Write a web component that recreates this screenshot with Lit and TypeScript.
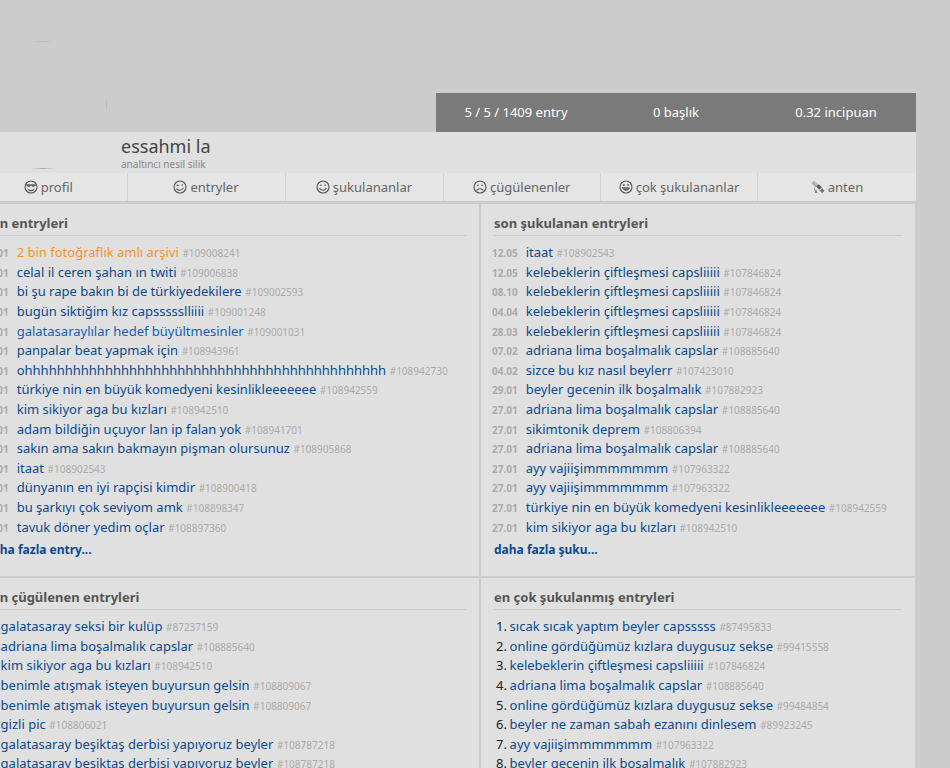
import { LitElement, html, css, svg } from "lit";
import { customElement } from "lit/decorators.js";

type Row = { d?: string; t: string; id: string; c?: string };

const E = (d: string, t: string, id: string, c?: string): Row => ({ d, t, id, c });
const N = (t: string, id: string): Row => ({ t, id });

const recent: Row[] = [
  E("30.01", "2 bin fotoğraflık amlı arşivi", "#109008241", "orange"),
  E("30.01", "celal il ceren şahan ın twiti", "#109006838"),
  E("30.01", "bi şu rape bakın bi de türkiyedekilere", "#109002593"),
  E("30.01", "bugün siktiğim kız capssssslliiii", "#109001248"),
  E("30.01", "galatasaraylılar hedef büyültmesinler", "#109001031", "light"),
  E("29.01", "panpalar beat yapmak için", "#108943961"),
  E("29.01", "ohhhhhhhhhhhhhhhhhhhhhhhhhhhhhhhhhhhhhhhhhhhhh", "#108942730"),
  E("29.01", "türkiye nin en büyük komedyeni kesinlikleeeeeee", "#108942559"),
  E("29.01", "kim sikiyor aga bu kızları", "#108942510"),
  E("29.01", "adam bildiğin uçuyor lan ip falan yok", "#108941701"),
  E("29.01", "sakın ama sakın bakmayın pişman olursunuz", "#108905868"),
  E("28.01", "itaat", "#108902543"),
  E("28.01", "dünyanın en iyi rapçisi kimdir", "#108900418"),
  E("28.01", "bu şarkıyı çok seviyom amk", "#108898347"),
  E("28.01", "tavuk döner yedim oçlar", "#108897360"),
];

const liked: Row[] = [
  E("12.05", "itaat", "#108902543"),
  E("12.05", "kelebeklerin çiftleşmesi capsliiiii", "#107846824"),
  E("08.10", "kelebeklerin çiftleşmesi capsliiiii", "#107846824"),
  E("04.04", "kelebeklerin çiftleşmesi capsliiiii", "#107846824"),
  E("28.03", "kelebeklerin çiftleşmesi capsliiiii", "#107846824"),
  E("07.02", "adriana lima boşalmalık capslar", "#108885640"),
  E("04.02", "sizce bu kız nasıl beylerr", "#107423010"),
  E("29.01", "beyler gecenin ilk boşalmalık", "#107882923"),
  E("27.01", "adriana lima boşalmalık capslar", "#108885640"),
  E("27.01", "sikimtonik deprem", "#108806394"),
  E("27.01", "adriana lima boşalmalık capslar", "#108885640"),
  E("27.01", "ayy vajiişimmmmmmm", "#107963322"),
  E("27.01", "ayy vajiişimmmmmmm", "#107963322"),
  E("27.01", "türkiye nin en büyük komedyeni kesinlikleeeeeee", "#108942559"),
  E("27.01", "kim sikiyor aga bu kızları", "#108942510"),
];

const disliked: Row[] = [
  N("galatasaray seksi bir kulüp", "#87237159"),
  N("adriana lima boşalmalık capslar", "#108885640"),
  N("kim sikiyor aga bu kızları", "#108942510"),
  N("benimle atışmak isteyen buyursun gelsin", "#108809067"),
  N("benimle atışmak isteyen buyursun gelsin", "#108809067"),
  N("gizli pic", "#108806021"),
  N("galatasaray beşiktaş derbisi yapıyoruz beyler", "#108787218"),
  N("galatasaray beşiktaş derbisi yapıyoruz beyler", "#108787218"),
];

const most: Row[] = [
  N("sıcak sıcak yaptım beyler capsssss", "#87495833"),
  N("online gördüğümüz kızlara duygusuz sekse", "#99415558"),
  N("kelebeklerin çiftleşmesi capsliiiii", "#107846824"),
  N("adriana lima boşalmalık capslar", "#108885640"),
  N("online gördüğümüz kızlara duygusuz sekse", "#99484854"),
  N("beyler ne zaman sabah ezanını dinlesem", "#89923245"),
  N("ayy vajiişimmmmmmm", "#107963322"),
  N("beyler gecenin ilk boşalmalık", "#107882923"),
];

const face = (inner: unknown) => html`<svg class="ico" viewBox="0 0 14 14" fill="none" stroke="#555" stroke-width="1.1" stroke-linecap="round">
  <circle cx="7" cy="7" r="6"></circle>${inner}
</svg>`;

const icons: Record<string, unknown> = {
  profil: face(svg`<path d="M2 5h10" stroke-width="1"></path><path d="M3 5h3.4c0 2.2-3.2 2.2-3.4 0zM7.6 5H11c-.2 2.2-3.4 2.2-3.4 0z" fill="#666" stroke-width=".6"></path><path d="M4.2 9.8c1.6 1 4 1 5.6 0"></path>`),
  entryler: face(svg`<path d="M3.9 5.3h1.8"></path><circle cx="9.2" cy="5" r=".8" fill="#555" stroke="none"></circle><path d="M3.8 8.9c1.6 1.9 4.6 1.9 6.4-.7"></path>`),
  sukulananlar: face(svg`<circle cx="4.9" cy="5.2" r=".8" fill="#555" stroke="none"></circle><circle cx="9.1" cy="5.2" r=".8" fill="#555" stroke="none"></circle><path d="M3.8 8.4c1.6 2.4 4.8 2.4 6.4 0"></path>`),
  cugulenenler: face(svg`<circle cx="4.9" cy="5.2" r=".8" fill="#555" stroke="none"></circle><circle cx="9.1" cy="5.2" r=".8" fill="#555" stroke="none"></circle><path d="M4 10.2c1.6-2 4.4-2 6 0"></path>`),
  cok: face(svg`<circle cx="4.9" cy="4.9" r=".9" fill="#555" stroke="none"></circle><circle cx="9.1" cy="4.9" r=".9" fill="#555" stroke="none"></circle><path d="M3.6 7.8h6.8c-.2 3.4-6.6 3.4-6.8 0z" fill="#777" stroke-width=".8"></path>`),
  anten: html`<svg class="ico" viewBox="0 0 14 14" stroke="none">
    <path d="M.6 3.2L3 .8l4 4.2-2.4 2.4z" fill="#a6a6a6"></path>
    <path d="M1.8 2.2l3.8 3.9M3.3 1.8l3 3.2" stroke="#d4d4d4" stroke-width=".5" fill="none"></path>
    <path d="M5.2 6.6l2.6-2.4 3 3-2.6 2.6z" fill="#5a5a5a"></path>
    <path d="M8.6 10.4L11 8l2.6 2.8-2.4 2.4z" fill="#777"></path>
    <path d="M3.4 7.4c-.2 1.8 1.2 3.4 3 3.4l-1 .8 1.6 1.2H3.8l.8-2c-1.4-.8-2-2-1.2-3.4z" fill="#666"></path>
  </svg>`,
};

const tabs: [string, string][] = [
  ["profil", "profil"],
  ["entryler", "entryler"],
  ["sukulananlar", "şukulananlar"],
  ["cugulenenler", "çügülenenler"],
  ["cok", "çok şukulananlar"],
  ["anten", "anten"],
];

@customElement("app-root")
export class AppRoot extends LitElement {
  static styles = css`
    :host {
      display: block;
      width: 950px;
      height: 768px;
      overflow: hidden;
      position: relative;
      background: #cccccc;
      font-family: "Noto Sans", "Open Sans", sans-serif;
    }
    .page {
      width: 946px;
      margin-left: -30px;
      padding-top: 93px;
    }
    .stats {
      display: flex;
      width: 480px;
      height: 39px;
      margin-left: auto;
      background: #7a7a7a;
      color: #fff;
      font-size: 13px;
      line-height: 39px;
      text-align: center;
    }
    .stats span { flex: 1; }
    .head {
      height: 41px;
      box-sizing: border-box;
      padding-left: 151px;
      background: #e0e0e0;
      color: #444;
      position: relative;
    }
    .name { font-size: 18px; line-height: 28px; }
    .sub { font-size: 10px; line-height: 13px; color: #888; margin-top: -2px; }
    .tabs {
      display: grid;
      grid-template-columns: 157.5px 158px 158px 157.5px 157px 158px;
      height: 28px;
      background: #e5e5e5;
    }
    .tab {
      display: flex;
      align-items: center;
      justify-content: center;
      gap: 3px;
      font-size: 13px;
      color: #666;
      border-right: 1px solid #d2d2d2;
    }
    .tab:last-child { border-right: 0; }
    .ico { width: 14px; height: 14px; flex: none; }
    .grid {
      display: grid;
      grid-template-columns: 509px 434px;
      grid-template-rows: 372px 372px;
      gap: 2px;
      margin-top: 3px;
    }
    .card {
      background: #e0e0e0;
      padding: 10px 13px 0;
      min-width: 0;
    }
    .card.left { padding-left: 15px; }
    h3 {
      margin: 0 0 7.3px;
      font-size: 13px;
      line-height: 18px;
      font-weight: 700;
      color: #555;
      padding-bottom: 3px;
      border-bottom: 1px solid #cacaca;
    }
    .row {
      display: flex;
      align-items: baseline;
      height: 19.6px;
      line-height: 19.6px;
      white-space: nowrap;
      font-size: 13px;
    }
    .date {
      width: 33.7px;
      margin-left: -2px;
      flex: none;
      font-size: 10px;
      font-weight: 700;
      color: #aaa;
    }
    .num { width: 16px; margin-left: 2px; margin-right: -2.4px; flex: none; color: #222; }
    .link { color: #0b4a8f; }
    .link.orange { color: #f7931e; }
    .link.light { color: #0f62b8; }
    .id { margin-left: 3.6px; font-size: 10px; color: #aaa; }
    .more {
      display: block;
      margin-top: 3.7px;
      font-size: 12px;
      line-height: 18px;
      font-weight: 700;
      color: #0b4a8f;
    }
    .mark { position: absolute; background: #b9b9b9; }
    .m1 { left: 33px; top: 41px; width: 20px; height: 1px; background: linear-gradient(90deg, #ccc, #bbb, #ccc); }
    .m2 { left: 106px; top: 95px; width: 1px; height: 19px; background: linear-gradient(#ccc, #bbb, #ccc); }
    .m3 { left: 30px; top: 168px; width: 26px; height: 1px; background: linear-gradient(90deg, #e0e0e0, #aaa, #e0e0e0); }
  `;

  private renderRows(rows: Row[], numbered: boolean) {
    return rows.map(
      (r, i) => html`<div class="row">
        ${numbered ? html`<span class="num">${i + 1}.</span>` : html`<span class="date">${r.d}</span>`}
        <span class="link ${r.c ?? ""}">${r.t}</span><span class="id">${r.id}</span>
      </div>`
    );
  }

  private renderCard(title: string, rows: Row[], numbered: boolean, left: boolean, more?: string) {
    return html`<section class="card ${left ? "left" : ""}">
      <h3>${title}</h3>
      ${this.renderRows(rows, numbered)}
      ${more ? html`<a class="more">${more}</a>` : ""}
    </section>`;
  }

  render() {
    return html`<div class="page">
        <div class="stats">
          <span>5 / 5 / 1409 entry</span><span>0 başlık</span><span>0.32 incipuan</span>
        </div>
        <div class="head">
          <div class="name">essahmi la</div>
          <div class="sub">analtıncı nesil silik</div>
        </div>
        <nav class="tabs">
          ${tabs.map(([k, t]) => html`<div class="tab">${icons[k]}<span>${t}</span></div>`)}
        </nav>
        <div class="grid">
          ${this.renderCard("son entryleri", recent, false, true, "daha fazla entry...")}
          ${this.renderCard("son şukulanan entryleri", liked, false, false, "daha fazla şuku...")}
          ${this.renderCard("son çügülenen entryleri", disliked, true, true)}
          ${this.renderCard("en çok şukulanmış entryleri", most, true, false)}
        </div>
      </div>
      <i class="mark m1"></i><i class="mark m2"></i><i class="mark m3"></i>`;
  }
}
